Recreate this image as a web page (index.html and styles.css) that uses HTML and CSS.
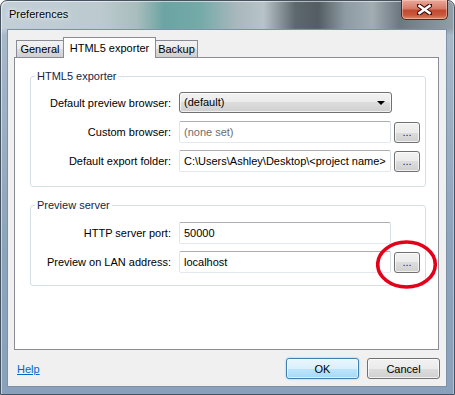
FILE: index.html
```html
<!DOCTYPE html>
<html lang="en">

<head>
    <meta charset="UTF-8">
    <title>Preferences</title>
    <link rel="stylesheet" href="styles.css">
</head>

<body>
    <div class="window">
        <div class="titlebar">
            <span class="title">Preferences</span>
            <div class="close">
                <svg width="15" height="11" viewBox="0 0 15 11">
                    <path d="M2 1.5 L13 9.5 M13 1.5 L2 9.5" stroke="#3a1010" stroke-width="4.6" stroke-linecap="square"/>
                    <path d="M2.5 2 L12.5 9 M12.5 2 L2.5 9" stroke="#fff" stroke-width="2.6" stroke-linecap="square"/>
                </svg>
            </div>
        </div>

        <div class="client">
            <ul class="tabs">
                <li class="tab">General</li>
                <li class="tab on">HTML5 exporter</li>
                <li class="tab">Backup</li>
            </ul>

            <div class="panel">
                <fieldset class="group first">
                    <legend>HTML5 exporter</legend>
                    <div class="row">
                        <label>Default preview browser:</label>
                        <div class="combo">(default)<span class="arrow"></span></div>
                    </div>
                    <div class="row">
                        <label>Custom browser:</label>
                        <div class="field empty">(none set)</div>
                        <button class="more">...</button>
                    </div>
                    <div class="row">
                        <label>Default export folder:</label>
                        <div class="field">C:\Users\Ashley\Desktop\&lt;project name&gt;</div>
                        <button class="more">...</button>
                    </div>
                </fieldset>

                <fieldset class="group second">
                    <legend>Preview server</legend>
                    <div class="row">
                        <label>HTTP server port:</label>
                        <div class="field">50000</div>
                    </div>
                    <div class="row">
                        <label>Preview on LAN address:</label>
                        <div class="field">localhost</div>
                        <button class="more">...</button>
                    </div>
                </fieldset>
            </div>

            <div class="footer">
                <a class="help" href="#">Help</a>
                <button class="btn ok">OK</button>
                <button class="btn">Cancel</button>
            </div>
        </div>

        <!-- red marker drawn over the screenshot -->
        <svg class="mark" width="62" height="50" viewBox="0 0 62 50">
            <ellipse cx="30.5" cy="24.5" rx="28.8" ry="22.5" fill="none" stroke="#e5001a" stroke-width="3.6"/>
        </svg>
    </div>
</body>

</html>
```

FILE: styles.css
```css
* {
    box-sizing: border-box;
}

body {
    margin: 0;
    font-family: "Liberation Sans", Arial, sans-serif;
    font-size: 11px;
    color: #000;
}

.window {
    position: relative;
    width: 455px;
    height: 395px;
    display: flex;
    flex-direction: column;
    padding: 0 7px 7px 6px;
    border: 1px solid #45525f;
    border-radius: 7px 7px 0 0;
    /* glass frame: blurred desktop on top, blue-gray sides */
    background:
        linear-gradient(180deg, rgba(0, 0, 0, 0) 0, rgba(0, 0, 0, 0) 27px, #a7b8c9 34px, #8ea4bd 60%, #8aa1bb 100%),
        linear-gradient(90deg, #c3cfd6 0, #bccad0 22%, #a9bdbd 30%, #6ba4a3 36%, #74aaa8 44%, #a9b8bd 52%, #b7c3c9 58%, #5d686e 65%, #535d63 70%, #8e9ba2 76%, #a1adb3 82%, #6d7880 88%, #939fa7 100%);
    box-shadow: inset 1px 1px 0 rgba(255, 255, 255, 0.55), inset -1px 0 0 rgba(255, 255, 255, 0.35);
}

.titlebar {
    height: 28px;
    display: flex;
    justify-content: space-between;
    align-items: flex-start;
}

.title {
    padding: 7px 0 0 2px;
    line-height: 13px;
    text-shadow: 0 0 6px rgba(255, 255, 255, 0.9), 0 0 3px rgba(255, 255, 255, 0.9);
}

.close {
    width: 47px;
    height: 20px;
    margin: -1px -1px 0 0;
    display: flex;
    align-items: center;
    justify-content: center;
    border: 1px solid #5a2420;
    border-top: none;
    border-radius: 0 0 5px 5px;
    background: linear-gradient(180deg, #e9a99a 0, #d77b68 45%, #c24a30 55%, #c9593d 80%, #e08a6a 100%);
    box-shadow: inset 0 0 0 1px rgba(255, 220, 210, 0.45);
}

.client {
    flex: 1;
    display: flex;
    flex-direction: column;
    padding: 7px 7px 0 6px;
    background: #f0f0f0;
    border: 1px solid #7d90a5;
}

/* tabs */
.tabs {
    margin: 0 0 0 2px;
    padding: 0;
    list-style: none;
    height: 20px;
    display: flex;
    align-items: flex-end;
}

.tab {
    height: 17px;
    line-height: 15px;
    padding-top: 1px;
    text-align: center;
    border: 1px solid #898c95;
    border-bottom: none;
    margin-right: -1px;
    background: linear-gradient(180deg, #f2f2f2 0, #ebebeb 50%, #dddddd 50%, #cfcfcf 100%);
}

.tab:nth-child(1) {
    width: 48px;
}

.tab:nth-child(3) {
    width: 43px;
}

.tab.on {
    position: relative;
    z-index: 1;
    width: 93px;
    height: 21px;
    margin-bottom: -1px;
    padding-top: 3px;
    background: #fff;
}

.panel {
    height: 293px;
    padding: 12px 12px 0 15px;
    background: #fff;
    border: 1px solid #898c95;
}

/* group boxes */
.group {
    margin: 0;
    padding: 9px 0 14px 0;
    border: 1px solid #d5dfe5;
    border-radius: 3px;
    box-shadow: inset 1px 1px 0 #fff;
}

.group legend {
    margin-left: 4px;
    padding: 0 2px;
    line-height: 13px;
    color: #14264a;
}

.group.second {
    margin-top: 12px;
    padding: 10px 0 12px 0;
}

.row {
    height: 22px;
    display: flex;
    align-items: center;
}

.row + .row {
    margin-top: 7px;
}

.row label {
    width: 140px;
    text-align: right;
    margin-right: 8px;
}

.field {
    width: 212px;
    height: 22px;
    padding: 0 4px;
    line-height: 20px;
    white-space: nowrap;
    overflow: hidden;
    background: #fff;
    border: 1px solid;
    border-color: #abadb3 #dbdfe6 #e3e9ef #e2e3ea;
    border-radius: 2px;
}

.field.empty {
    color: #6d6d6d;
}

.combo {
    position: relative;
    width: 213px;
    height: 21px;
    align-self: flex-start;
    padding: 0 4px;
    line-height: 19px;
    border: 1px solid #707070;
    border-radius: 3px;
    background: linear-gradient(180deg, #f2f2f2 0, #ebebeb 50%, #dddddd 50%, #cfcfcf 100%);
    box-shadow: inset 0 0 0 1px rgba(255, 255, 255, 0.7);
}

.arrow {
    position: absolute;
    right: 6px;
    top: 8px;
    border-left: 4px solid transparent;
    border-right: 4px solid transparent;
    border-top: 4px solid #000;
}

.more,
.btn {
    font-family: inherit;
    font-size: 11px;
    color: #000;
    padding: 0;
    border: 1px solid #707070;
    border-radius: 3px;
    background: linear-gradient(180deg, #f2f2f2 0, #ebebeb 50%, #dddddd 50%, #cfcfcf 100%);
    box-shadow: inset 0 0 0 1px rgba(255, 255, 255, 0.7);
}

.more {
    width: 26px;
    height: 21px;
    margin-left: 3px;
    line-height: 17px;
    color: #1a2060;
}

.footer {
    height: 36px;
    display: flex;
    align-items: center;
    padding: 1px 0 0 3px;
    margin-right: -1px;
}

.help {
    color: #0066cc;
    margin-right: auto;
}

.btn {
    width: 73px;
    height: 21px;
}

.btn + .btn {
    margin-left: 8px;
}

.btn.ok {
    border-color: #3c7fb1;
    background: linear-gradient(180deg, #eaf6fd 0, #d9f0fc 50%, #bee6fd 50%, #a7d9f5 100%);
    box-shadow: inset 0 0 0 1px rgba(255, 255, 255, 0.6), 0 0 2px #7fc6f0;
}

.mark {
    position: absolute;
    left: 375px;
    top: 239px;
}
```
